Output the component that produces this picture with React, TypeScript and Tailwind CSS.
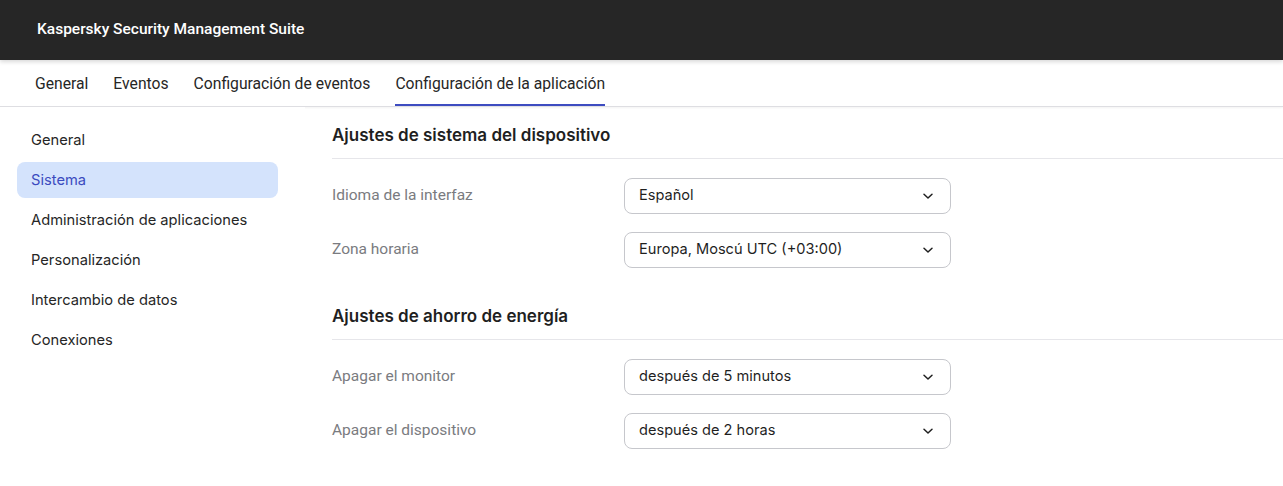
import React from "react";

const tabs = ["General", "Eventos", "Configuración de eventos", "Configuración de la aplicación"];
const side = ["General", "Sistema", "Administración de aplicaciones", "Personalización", "Intercambio de datos", "Conexiones"];

function Chevron() {
  return (
    <svg width="14" height="14" viewBox="0 0 14 14" fill="none" className="shrink-0">
      <path d="M3 5.25 7 9l4-3.75" stroke="#1f1f1f" strokeWidth="1.5" strokeLinecap="round" strokeLinejoin="round" />
    </svg>
  );
}

function Row({ label, value }: { label: string; value: string }) {
  return (
    <div className="flex items-center h-[36px]">
      <div className="w-[292px] text-[15.5px] text-[#7a7b80]" style={{ fontFamily: "Roboto, sans-serif" }}>{label}</div>
      <div className="w-[327px] h-[36px] flex items-center justify-between pl-[14px] pr-[15px] border border-[#c6c7cc] rounded-[8px]">
        <span className="text-[14.6px] text-[#1f1f1f]" style={{ fontFamily: "Inter, sans-serif" }}>{value}</span>
        <Chevron />
      </div>
    </div>
  );
}

function Section({ title, rows }: { title: string; rows: [string, string][] }) {
  return (
    <div>
      <div className="pt-[16px] pb-[11px] leading-[24px] border-b border-[#e6e6ea] text-[17px] font-semibold text-[#1f1f1f]" style={{ fontFamily: "Inter, sans-serif" }}>
        {title}
      </div>
      <div className="flex flex-col gap-[18px] pt-[19px]">
        {rows.map(([l, v]) => (
          <Row key={l} label={l} value={v} />
        ))}
      </div>
    </div>
  );
}

export default function App() {
  return (
    <div className="w-[1283px] h-[486px] bg-white overflow-hidden flex flex-col">
      <div className="h-[60px] shrink-0 bg-[#262626] flex items-center pl-[37px] pb-[1px] shadow-[0_2px_4px_rgba(0,0,0,0.15)] relative z-10">
        <span className="text-white text-[15.5px] font-medium" style={{ fontFamily: "Roboto, sans-serif" }}>
          Kaspersky Security Management Suite
        </span>
      </div>
      <div className="h-[47px] shrink-0 flex items-stretch gap-[25px] pl-[35px] border-b border-[#dedee2] shadow-[0_1px_2px_rgba(0,0,0,0.05)]">
        {tabs.map((t, i) => (
          <div
            key={t}
            className={`flex items-center pt-[4px] text-[15.7px] text-[#262626] border-b-[2px] ${i === 3 ? "border-[#3d4cc0]" : "border-transparent"}`}
            style={{ fontFamily: "Roboto, sans-serif" }}
          >
            {t}
          </div>
        ))}
      </div>
      <div className="flex flex-1">
        <div className="w-[305px] bg-white pt-[15px] pl-[17px] pr-[27px] flex flex-col">
          {side.map((s, i) => (
            <div
              key={s}
              className={`h-[36px] mb-[4px] flex items-center pl-[14px] rounded-[8px] text-[14.7px] ${i === 1 ? "bg-[#d4e3fc] text-[#3b4bbf]" : "bg-white text-[#262626]"}`}
              style={{ fontFamily: "Inter, sans-serif" }}
            >
              {s}
            </div>
          ))}
        </div>
        <div className="flex-1 pl-[27px] flex flex-col gap-[20px]">
          <Section
            title="Ajustes de sistema del dispositivo"
            rows={[
              ["Idioma de la interfaz", "Español"],
              ["Zona horaria", "Europa, Moscú UTC (+03:00)"],
            ]}
          />
          <Section
            title="Ajustes de ahorro de energía"
            rows={[
              ["Apagar el monitor", "después de 5 minutos"],
              ["Apagar el dispositivo", "después de 2 horas"],
            ]}
          />
        </div>
      </div>
    </div>
  );
}
